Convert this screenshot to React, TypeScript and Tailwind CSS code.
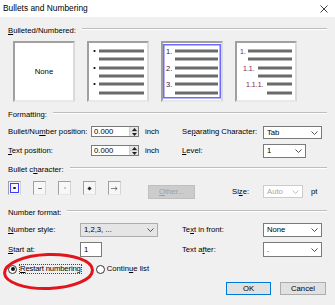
import React from "react";

const U = ({ children }: { children: React.ReactNode }) => (
  <span className="underline underline-offset-[1px] decoration-[0.7px]">{children}</span>
);

const Section = ({ children }: { children: React.ReactNode }) => (
  <div className="flex items-center h-[11px]">
    <span className="whitespace-nowrap">{children}</span>
    <div className="flex-1 ml-[6px] mt-[-3px] border-t border-[#bdbdbd] border-b border-b-white" />
  </div>
);

const Chevron = ({ color = "#404040" }: { color?: string }) => (
  <svg width="7" height="4" viewBox="0 0 7 4">
    <path d="M0.5 0.5 L3.5 3.5 L6.5 0.5" fill="none" stroke={color} strokeWidth="0.9" />
  </svg>
);

const Select = ({
  value,
  className,
  disabled,
  gray,
}: {
  value: string;
  className: string;
  disabled?: boolean;
  gray?: boolean;
}) => (
  <div
    className={`flex items-center justify-between pl-[3px] pr-[3px] border ${
      disabled
        ? "border-[#cccccc] bg-white text-[#a6a6a6]"
        : gray
        ? "border-[#adadad] bg-[#e5e5e5]"
        : "border-[#7a7a7a] bg-white"
    } ${className}`}
  >
    <span>{value}</span>
    <Chevron color={disabled ? "#b5b5b5" : "#404040"} />
  </div>
);

const Spin = ({ value }: { value: string }) => (
  <div className="flex w-[48px] h-[11px] border border-[#7a7a7a] bg-white">
    <div className="flex-1 flex items-center pl-[2px]">{value}</div>
    <div className="w-[9px] flex flex-col bg-[#e6e6e6] border-l border-[#d0d0d0]">
      <div className="flex-1 flex items-center justify-center border-b border-[#c8c8c8]">
        <svg width="5" height="3" viewBox="0 0 5 3">
          <path d="M0 3 L2.5 0 L5 3 Z" fill="#222" />
        </svg>
      </div>
      <div className="flex-1 flex items-center justify-center">
        <svg width="5" height="3" viewBox="0 0 5 3">
          <path d="M0 0 L2.5 3 L5 0 Z" fill="#222" />
        </svg>
      </div>
    </div>
  </div>
);

const lineYs = [8, 16, 25, 33, 41, 50];

const Preview = ({ children, selected }: { children?: React.ReactNode; selected?: boolean }) => (
  <div className="w-[62px] h-[61px] bg-white border-2 border-t-[#a0a0a0] border-l-[#a0a0a0] border-r-[#dadada] border-b-[#e8e8e8]">
    <svg width="58" height="57" viewBox="0 0 58 57">
      {selected && (
        <rect x="0.75" y="1.75" width="56.5" height="53" fill="none" stroke="#6b6bff" strokeWidth="1.5" />
      )}
      {children}
    </svg>
  </div>
);

const Bar = ({ x1, y }: { x1: number; y: number }) => (
  <rect x={x1} y={y - 1.5} width={55 - x1} height="3" fill="#6a6a6a" />
);

const CharBox = ({ children, selected }: { children: React.ReactNode; selected?: boolean }) => (
  <div className="w-[13px] h-[14px] p-[1px] bg-[#f7f7f7] border border-t-[#a0a0a0] border-l-[#a0a0a0] border-r-[#d4d4d4] border-b-[#e6e6e6]">
    <div
      className={`w-full h-full flex items-center justify-center ${
        selected ? "border border-[#3b3bff]" : ""
      }`}
    >
      {children}
    </div>
  </div>
);

export default function App() {
  return (
    <div className="w-[335px] h-[305px] bg-[#f0f0f0] text-[7.7px] text-black font-['Liberation_Sans',Arial,sans-serif] relative overflow-hidden">
      {/* Title bar */}
      <div className="h-[17px] bg-white flex items-center justify-between pl-[3px] pr-[7px]">
        <span className="text-[8.4px]">Bullets and Numbering</span>
        <svg width="8" height="8" viewBox="0 0 8 8">
          <path d="M0.5 0.5 L7.5 7.5 M7.5 0.5 L0.5 7.5" stroke="#111" strokeWidth="0.8" />
        </svg>
      </div>

      <div className="px-[8px]">
        <div className="mt-[8px]">
          <Section>
            <U>B</U>ulleted/Numbered:
          </Section>
        </div>

        {/* Preview boxes */}
        <div className="mt-[5px] ml-[5px] flex gap-[12px]">
          <div className="w-[62px] h-[61px] bg-white border-2 border-t-[#a0a0a0] border-l-[#a0a0a0] border-r-[#dadada] border-b-[#e8e8e8] flex items-center justify-center">
            None
          </div>
          <Preview>
            {lineYs.map((y, i) => (
              <React.Fragment key={y}>
                {i % 2 === 0 && <circle cx="5.5" cy={y} r="1.1" fill="#000" />}
                <Bar x1={10} y={y} />
              </React.Fragment>
            ))}
          </Preview>
          <Preview selected>
            {lineYs.map((y, i) => (
              <React.Fragment key={y}>
                {i % 2 === 0 && (
                  <text x="3" y={y + 2.7} fontSize="7.5" fill="#1c1c4a" fontFamily="Liberation Sans, Arial, sans-serif">
                    {i / 2 + 1}.
                  </text>
                )}
                <Bar x1={12} y={y} />
              </React.Fragment>
            ))}
          </Preview>
          <Preview>
            {[
              { n: "1.", tx: 3, x1: 11 },
              { n: "1.1.", tx: 6, x1: 21 },
              { n: "1.1.1.", tx: 9, x1: 30 },
            ].map((r, i) => (
              <React.Fragment key={r.n}>
                <text x={r.tx} y={lineYs[i * 2] + 2.7} fontSize="7" fill="#7c2442" fontFamily="Liberation Sans, Arial, sans-serif">
                  {r.n}
                </text>
                <Bar x1={r.x1} y={lineYs[i * 2]} />
                <Bar x1={r.x1} y={lineYs[i * 2 + 1]} />
              </React.Fragment>
            ))}
          </Preview>
        </div>

        {/* Formatting */}
        <div className="mt-[7px]">
          <Section>Formatting:</Section>
        </div>
        <div className="mt-[6px] h-[13px] flex items-start">
          <div className="w-[174px] flex items-center">
            <span className="w-[83px]">
              Bullet/Nu<U>m</U>ber position:
            </span>
            <Spin value="0.000" />
            <span className="ml-[6px]">inch</span>
          </div>
          <span className="w-[81px] h-[11px] flex items-center">
            Se<U>p</U>arating Character:
          </span>
          <Select value="Tab" className="w-[59px] h-[13px]" />
        </div>
        <div className="mt-[5px] h-[14px] flex items-center">
          <div className="w-[174px] flex items-center">
            <span className="w-[83px]">
              <U>T</U>ext position:
            </span>
            <Spin value="0.000" />
            <span className="ml-[6px]">inch</span>
          </div>
          <span className="w-[81px]">
            <U>L</U>evel:
          </span>
          <Select value="1" className="w-[43px] h-[14px]" />
        </div>

        {/* Bullet character */}
        <div className="mt-[6px]">
          <Section>
            Bullet c<U>h</U>aracter:
          </Section>
        </div>
        <div className="mt-[6px] h-[18px] flex items-start">
          <div className="flex gap-[12px]">
            <CharBox selected>
              <span className="w-[2.5px] h-[2.5px] rounded-full bg-[#222]" />
            </CharBox>
            <CharBox>
              <span className="w-[4px] h-[1px] bg-[#777]" />
            </CharBox>
            <CharBox>
              <span className="w-[2px] h-[2px] rounded-full bg-[#bbb]" />
            </CharBox>
            <CharBox>
              <span className="w-[3px] h-[3px] rotate-45 bg-[#222]" />
            </CharBox>
            <CharBox>
              <svg width="7" height="5" viewBox="0 0 7 5">
                <path d="M0 2.5 H6 M4 0.7 L6.2 2.5 L4 4.3" fill="none" stroke="#555" strokeWidth="0.7" />
              </svg>
            </CharBox>
          </div>
          <div className="ml-[27px] mt-[4px] w-[47px] h-[14px] bg-[#cccccc] border border-[#bfbfbf] text-[#a0a0a0] flex items-center justify-center">
            <U>O</U>ther...
          </div>
          <span className="ml-[37px] mt-[4px] w-[31px] h-[13px] flex items-center">
            Si<U>z</U>e:
          </span>
          <Select value="Auto" disabled className="mt-[4px] w-[40px] h-[13px]" />
          <span className="ml-[8px] mt-[4px] h-[13px] flex items-center">pt</span>
        </div>

        {/* Number format */}
        <div className="mt-[8px]">
          <Section>Number format:</Section>
        </div>
        <div className="mt-[5px] h-[14px] flex items-center">
          <div className="w-[174px] flex items-center">
            <span className="w-[72px]">
              <U>N</U>umber style:
            </span>
            <Select value="1,2,3, ..." gray className="w-[78px] h-[14px]" />
          </div>
          <span className="w-[81px]">
            Te<U>x</U>t in front:
          </span>
          <Select value="None" className="w-[59px] h-[14px]" />
        </div>
        <div className="mt-[5px] h-[15px] flex items-center">
          <div className="w-[174px] flex items-center">
            <span className="w-[72px]">
              <U>S</U>tart at:
            </span>
            <div className="w-[22px] h-[15px] border border-[#7a7a7a] bg-white pl-[3px] flex items-center">1</div>
          </div>
          <span className="w-[81px]">
            Text a<U>f</U>ter:
          </span>
          <Select value="." className="w-[59px] h-[15px]" />
        </div>

        {/* Radios */}
        <div className="mt-[6px] h-[12px] flex items-center">
          <div className="w-[9px] h-[9px] rounded-full border border-[#333] bg-white flex items-center justify-center">
            <div className="w-[4px] h-[4px] rounded-full bg-[#111]" />
          </div>
          <span className="ml-[2px] h-[10px] flex items-center border border-dotted border-[#444] tracking-[-0.15px]">
            <U>R</U>estart numbering
          </span>
          <div className="ml-[14px] w-[9px] h-[9px] rounded-full border border-[#333] bg-white" />
          <span className="ml-[2px]">
            Contin<U>u</U>e list
          </span>
        </div>

        {/* Buttons */}
        <div className="mt-[7px] mr-[1px] flex justify-end gap-[9px]">
          <div className="w-[45px] h-[13px] bg-[#e1e1e1] border border-[#0078d7] flex items-center justify-center">
            OK
          </div>
          <div className="w-[46px] h-[13px] bg-[#e1e1e1] border border-[#adadad] flex items-center justify-center">
            Cancel
          </div>
        </div>
      </div>

      {/* Red annotation ellipse */}
      <svg className="absolute left-[2px] top-[252px]" width="93" height="39" viewBox="0 0 93 39">
        <ellipse cx="46.5" cy="19.5" rx="44" ry="17" fill="none" stroke="#e3141c" strokeWidth="3" transform="rotate(-2 46.5 19.5)" />
      </svg>
    </div>
  );
}
